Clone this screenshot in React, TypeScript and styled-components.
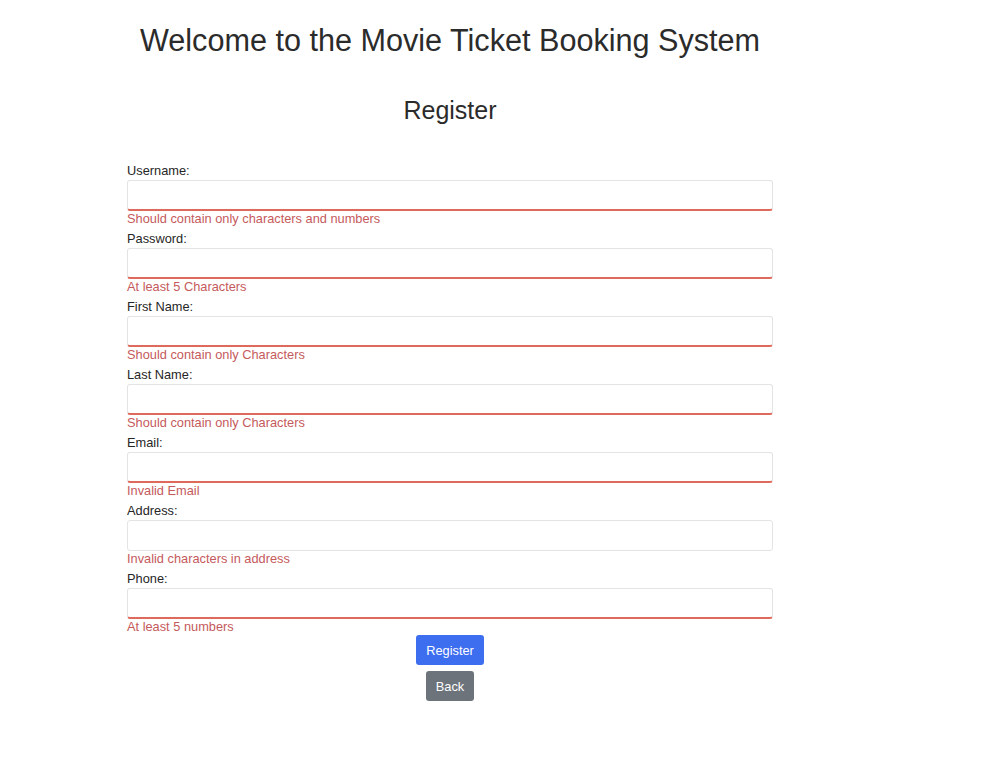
import styled, { createGlobalStyle } from "styled-components";

const GlobalStyle = createGlobalStyle`
  body {
    margin: 0;
    background: #ffffff;
    font-family: "Liberation Sans", Arial, sans-serif;
    color: #212529;
  }
`;

const Page = styled.div`
  width: 646px;
  padding: 21px 0 0 127px;
`;

const Title = styled.h1`
  margin: 0;
  font-size: 30.6px;
  line-height: 38px;
  font-weight: 400;
  color: #2b2b2b;
  text-align: center;
  white-space: nowrap;
`;

const SubTitle = styled.h2`
  margin: 36px 0 0;
  font-size: 25px;
  line-height: 30px;
  font-weight: 400;
  color: #2b2b2b;
  text-align: center;
`;

const Form = styled.form`
  margin-top: 38px;
  display: flex;
  flex-direction: column;
`;

const Field = styled.div`
  display: flex;
  flex-direction: column;
  margin-bottom: 4px;
`;

const Label = styled.label`
  font-size: 12.8px;
  line-height: 16px;
  color: #262626;
`;

const Input = styled.input<{ $invalid: boolean }>`
  box-sizing: border-box;
  margin-top: 1px;
  height: 31px;
  width: 100%;
  border: 1px solid #e4e4e4;
  border-bottom: ${(p) => (p.$invalid ? "2px solid #df6a5c" : "1px solid #e4e4e4")};
  border-radius: 3px;
  background: #fff;
  outline: none;
`;

const ErrorText = styled.div`
  font-size: 12.8px;
  line-height: 16px;
  color: #c55a5c;
`;

const Actions = styled.div`
  display: flex;
  flex-direction: column;
  align-items: center;
  gap: 6px;
  margin-top: -4px;
`;

const Button = styled.button<{ $variant: "primary" | "secondary" }>`
  font-family: "Liberation Sans", Arial, sans-serif;
  font-size: 12.8px;
  color: #ffffff;
  height: 30px;
  padding: 0 10px;
  border: none;
  border-radius: 3px;
  background: ${(p) => (p.$variant === "primary" ? "#3d6ef0" : "#6c737b")};
`;

const fields = [
  { label: "Username:", error: "Should contain only characters and numbers", invalid: true },
  { label: "Password:", error: "At least 5 Characters", invalid: true },
  { label: "First Name:", error: "Should contain only Characters", invalid: true },
  { label: "Last Name:", error: "Should contain only Characters", invalid: true },
  { label: "Email:", error: "Invalid Email", invalid: true },
  { label: "Address:", error: "Invalid characters in address", invalid: false },
  { label: "Phone:", error: "At least 5 numbers", invalid: true },
];

export default function App() {
  return (
    <>
      <GlobalStyle />
      <Page>
        <Title>Welcome to the Movie Ticket Booking System</Title>
        <SubTitle>Register</SubTitle>
        <Form onSubmit={(e) => e.preventDefault()}>
          {fields.map((f) => (
            <Field key={f.label}>
              <Label>{f.label}</Label>
              <Input $invalid={f.invalid} type={f.label === "Password:" ? "password" : "text"} />
              <ErrorText>{f.error}</ErrorText>
            </Field>
          ))}
          <Actions>
            <Button $variant="primary" type="submit">Register</Button>
            <Button $variant="secondary" type="button">Back</Button>
          </Actions>
        </Form>
      </Page>
    </>
  );
}
